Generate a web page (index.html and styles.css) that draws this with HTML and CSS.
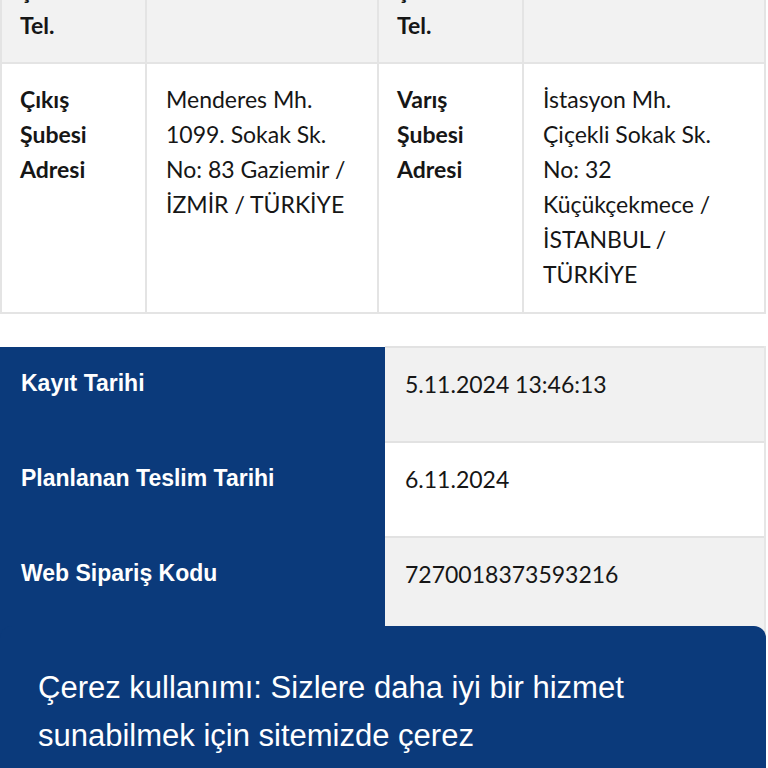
FILE: index.html
```html
<!DOCTYPE html>
<html lang="tr">
<head>
<meta charset="utf-8">
<title>Gönderi Detayı</title>
<link rel="stylesheet" href="styles.css">
</head>
<body>
<main class="page">
  <table class="branch-table">
    <colgroup>
      <col class="c-label"><col class="c-value"><col class="c-label"><col class="c-value-wide">
    </colgroup>
    <tr class="row-gray">
      <th>Çıkış<br>Şubesi<br>Tel.</th>
      <td></td>
      <th>Varış<br>Şubesi<br>Tel.</th>
      <td></td>
    </tr>
    <tr class="row-white">
      <th>Çıkış<br>Şubesi<br>Adresi</th>
      <td>Menderes Mh.<br>1099. Sokak Sk.<br>No: 83 Gaziemir /<br>İZMİR / TÜRKİYE</td>
      <th>Varış<br>Şubesi<br>Adresi</th>
      <td>İstasyon Mh.<br>Çiçekli Sokak Sk.<br>No: 32<br>Küçükçekmece /<br>İSTANBUL /<br>TÜRKİYE</td>
    </tr>
  </table>

  <table class="info-table">
    <tr class="alt">
      <th>Kayıt Tarihi</th>
      <td>5.11.2024 13:46:13</td>
    </tr>
    <tr>
      <th>Planlanan Teslim Tarihi</th>
      <td>6.11.2024</td>
    </tr>
    <tr class="alt last">
      <th>Web Sipariş Kodu</th>
      <td>7270018373593216</td>
    </tr>
  </table>
</main>

<div class="cookie-banner">
  <p class="cookie-text">Çerez kullanımı: Sizlere daha iyi bir hizmet sunabilmek için sitemizde çerez</p>
</div>
</body>
</html>
```
FILE: styles.css
```css
html, body {
  margin: 0;
  padding: 0;
  background: #ffffff;
}

body {
  width: 768px;
  height: 768px;
  overflow: hidden;
  font-family: "Lato", "Noto Sans", sans-serif;
  color: #161616;
}

.page {
  margin-top: -82px;
}

/* Branch table */
.branch-table {
  table-layout: fixed;
  width: 766px;
  border-collapse: separate;
  border-spacing: 2px;
  background: #e4e4e4;
  font-size: 23px;
  line-height: 35px;
}

.c-label { width: 143px; }
.c-value { width: 230px; }
.c-value-wide { width: 240px; }

.branch-table th,
.branch-table td {
  vertical-align: top;
  text-align: left;
  white-space: nowrap;
  padding: 18px 19px 20px 19px;
}

.branch-table th {
  font-weight: 700;
  padding-left: 18px;
}

.branch-table td {
  font-weight: 400;
}

.row-gray th,
.row-gray td {
  background: #f2f2f2;
  padding-bottom: 19px;
}

.row-white th,
.row-white td {
  background: #ffffff;
}

/* Info table */
.info-table {
  margin-top: 32px;
  table-layout: fixed;
  width: 766px;
  border-collapse: collapse;
}

.info-table th {
  width: 385px;
  background: #0b3a7b;
  color: #ffffff;
  font-family: "Liberation Sans", Arial, sans-serif;
  font-weight: 700;
  font-size: 23px;
  line-height: 28px;
  text-align: left;
  vertical-align: top;
  padding: 22px 21px 43px 21px;
  box-sizing: border-box;
}

.info-table td {
  background: #ffffff;
  border-top: 2px solid #e2e2e2;
  border-right: 2px solid #e6e6e6;
  font-size: 23px;
  line-height: 28px;
  vertical-align: top;
  padding: 22px 20px 43px 20px;
  color: #161616;
}

.info-table tr.alt td {
  background: #f1f1f1;
}

.info-table tr.last th,
.info-table tr.last td {
  padding-bottom: 70px;
}

/* Cookie banner overlays the bottom of the page */
.cookie-banner {
  position: fixed;
  left: 0;
  bottom: 0;
  width: 766px;
  height: 142px;
  box-sizing: border-box;
  background: #0b3a7b;
  border-radius: 12px 12px 0 0;
  padding: 38px 38px 0 38px;
}

.cookie-text {
  margin: 0;
  width: 620px;
  font-family: "Liberation Sans", Arial, sans-serif;
  font-size: 31px;
  line-height: 48px;
  color: #ffffff;
}
```
